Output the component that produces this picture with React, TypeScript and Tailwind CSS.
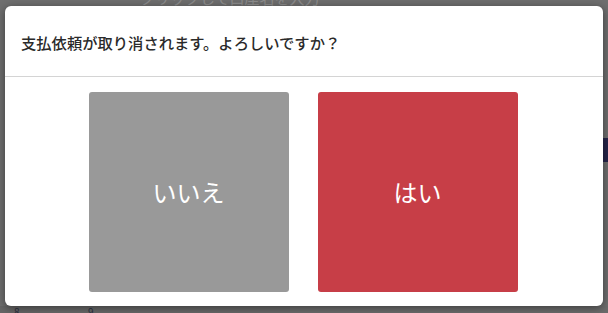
import { useState } from "react";

const font = { fontFamily: '"Noto Sans CJK JP", "Noto Sans", sans-serif' };

export default function App() {
  const [answer, setAnswer] = useState<"yes" | "no" | null>(null);

  return (
    <div
      className="relative h-[313px] w-[608px] overflow-hidden bg-[#6e6e6e]"
      style={font}
    >
      {/* dimmed page behind the dialog */}
      <p className="-mt-[12px] pl-[140px] text-[15px] leading-[20px] text-[#8c8c8c]">
        クリックして口座名を入力
      </p>
      <div className="absolute right-0 top-[138px] h-[24px] w-[5px] bg-[#26254a]" />
      <div className="absolute bottom-0 left-0 flex h-[7px] w-full">
        <div className="w-[40px] bg-[#666]" />
        <div className="w-[30px] bg-[#6a6a6a]" />
        <div className="w-[220px] bg-[#686868]" />
        <div className="flex-1 bg-[#6c6c6c]" />
      </div>
      <span className="absolute bottom-[-6px] left-[14px] text-[10px] text-[#2b3040]">8</span>
      <span className="absolute bottom-[-6px] left-[88px] text-[10px] text-[#2b3040]">9</span>

      {/* dialog */}
      <div className="absolute left-[5px] top-[6px] flex h-[300px] w-[598px] flex-col rounded-[6px] bg-white shadow-[0_2px_8px_rgba(0,0,0,0.45)]">
        <div className="flex h-[71px] items-center border-b border-[#d4d4d4] px-[16px] pt-[3px]">
          <h2 className="text-[15.3px] font-medium text-[#2a2a2a]">
            支払依頼が取り消されます。よろしいですか？
          </h2>
        </div>
        <div className="flex flex-1 justify-center gap-[29px] pr-[2px] pt-[15px]">
          <button
            type="button"
            onClick={() => setAnswer("no")}
            className="flex h-[200px] w-[200px] items-center justify-center rounded-[3px] bg-[#999999] text-[24px] text-white"
          >
            いいえ
          </button>
          <button
            type="button"
            onClick={() => setAnswer("yes")}
            className="flex h-[200px] w-[200px] items-center justify-center rounded-[3px] bg-[#c73e47] text-[24px] text-white"
          >
            はい
          </button>
        </div>
      </div>
      {answer && <span className="sr-only">{answer}</span>}
    </div>
  );
}
